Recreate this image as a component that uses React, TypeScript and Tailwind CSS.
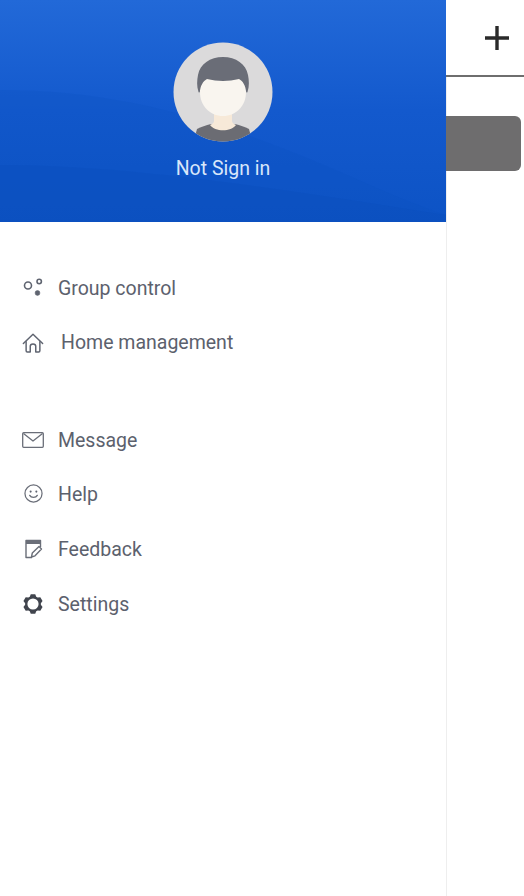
const Avatar = () => (
  <svg viewBox="0 0 100 100" className="w-[100px] h-[100px]">
    <defs>
      <clipPath id="c"><circle cx="50" cy="50" r="49.5" /></clipPath>
    </defs>
    <circle cx="50" cy="50" r="49.5" fill="#dbdadb" />
    <g clipPath="url(#c)">
      <path d="M24 87C28 85 33 83 38 82H62C67 83 72 85 76 87L80 102H20Z" fill="#6b6c73" />
      <path d="M41 66H59V79C59 81 61 82 63 83C58 90 42 90 37 83C39 82 41 81 41 79Z" fill="#f7e9d8" />
      <path d="M27 34H73V50C73 64 63 74 50 74C37 74 27 64 27 50Z" fill="#f9f5ef" />
      <path d="M25.5 50C23.5 44 24 38 25 33C27 22 37 15 50 15C63 15 73 22 75 33C76 38 76.5 44 74.5 50C73.8 51 73.2 50.5 73 49C72.5 44 70 39 66 37C61 38 55 39 50 39C45 39 39 38 34 37C30 39 27.5 44 27 49C26.8 50.5 26.2 51 25.5 50Z" fill="#6a6d77" />
    </g>
  </svg>
);

const GroupIcon = () => (
  <svg viewBox="0 0 20 20" className="w-5 h-5" fill="none" stroke="#5f6470" strokeWidth="1.6">
    <circle cx="5" cy="7.5" r="3.5" />
    <circle cx="16.2" cy="3.5" r="2.2" />
    <circle cx="14.5" cy="15" r="2.4" fill="#5f6470" strokeWidth="0.6" />
  </svg>
);

const HomeIcon = () => (
  <svg viewBox="0 0 24 24" className="w-6 h-6" fill="none" stroke="#5f6470" strokeWidth="1.6" strokeLinejoin="round" strokeLinecap="round">
    <path d="M1.5 12.5L12 2.5L22.5 12.5" />
    <path d="M4.5 10.5V20.5C4.5 21.3 5 21.8 5.8 21.8H9V15.5C9 14 10.2 13 12 13C13.8 13 15 14 15 15.5V21.8H18.2C19 21.8 19.5 21.3 19.5 20.5V10.5" />
  </svg>
);

const MailIcon = () => (
  <svg viewBox="0 0 22 16" className="w-[22px] h-4" fill="none" stroke="#6a6e78" strokeWidth="1.3" strokeLinejoin="round">
    <rect x="0.7" y="0.7" width="20.6" height="14.6" rx="1" />
    <path d="M1.5 1.5L11 9L20.5 1.5" />
  </svg>
);

const SmileIcon = () => (
  <svg viewBox="0 0 20 20" className="w-[19px] h-[19px] -translate-y-[2px]" fill="none" stroke="#6a6e78" strokeWidth="1.3" strokeLinecap="round">
    <circle cx="10" cy="10" r="9" />
    <circle cx="7" cy="8" r="1.1" fill="#5f6470" stroke="none" />
    <circle cx="13" cy="8" r="1.1" fill="#5f6470" stroke="none" />
    <path d="M6 12C7.5 14.8 12.5 14.8 14 12" strokeWidth="1.4" />
  </svg>
);

const FeedbackIcon = () => (
  <svg viewBox="0 0 20 20" className="w-5 h-5 -translate-y-[1px]" fill="none" stroke="#6a6e78" strokeWidth="1.4" strokeLinejoin="round">
    <path d="M17.5 8V1.5H3V18.5H9" />
    <rect x="3" y="1.5" width="14.5" height="3.5" fill="#6a6e78" stroke="none" />
    <path d="M8.5 18L9.3 14L16 7.5L18.5 10L12 16.8Z" />
  </svg>
);

const gearPath = (() => {
  const pt = (deg: number, r: number) => {
    const a = (deg * Math.PI) / 180;
    return `${(10 + r * Math.cos(a)).toFixed(2)} ${(10 + r * Math.sin(a)).toFixed(2)}`;
  };
  const pts: string[] = [];
  for (let i = 0; i < 6; i++) {
    const a = i * 60 - 90;
    pts.push(pt(a - 13, 10), pt(a + 13, 10), pt(a + 24, 7.9), pt(a + 36, 7.9));
  }
  return `M${pts.join("L")}Z M15.6 10A5.6 5.6 0 1 0 4.4 10A5.6 5.6 0 1 0 15.6 10Z`;
})();

const GearIcon = () => (
  <svg viewBox="0 0 20 20" className="w-5 h-5">
    <path d={gearPath} fill="#41454e" fillRule="evenodd" />
  </svg>
);

const Row = ({ icon, label, gap }: { icon: React.ReactNode; label: string; gap: string }) => (
  <div className={`flex items-center h-[54.6px] pl-[22px] ${gap}`}>
    <div className="w-[22px] flex justify-center items-center shrink-0">{icon}</div>
    <span className="text-[19.5px] text-[#5c616d] leading-none">{label}</span>
  </div>
);

export default function App() {
  return (
    <div className="flex w-[524px] h-[896px] bg-white overflow-hidden font-['Roboto',sans-serif]">
      <div className="w-[446px] shrink-0 flex flex-col">
        <div className="relative h-[222px] bg-gradient-to-b from-[#2269d8] via-[#1359cd] to-[#0d53c5] flex flex-col items-center pt-[42px] overflow-hidden">
          <svg viewBox="0 0 446 222" className="absolute inset-0 w-full h-full" preserveAspectRatio="none">
            <path d="M0 90C110 90 200 115 300 155C350 175 400 200 446 215V222H0Z" fill="#0b4fbe" opacity="0.2" />
            <path d="M0 165C120 165 260 185 446 215V222H0Z" fill="#0a4dbb" opacity="0.3" />
          </svg>
          <div className="relative">
            <Avatar />
          </div>
          <span className="relative mt-[16px] text-[19.5px] leading-[22px] text-[#d8e6fa]">Not Sign in</span>
        </div>
        <div className="pt-[39px] flex flex-col">
          <Row icon={<GroupIcon />} label="Group control" gap="gap-[14px]" />
          <Row icon={<HomeIcon />} label="Home management" gap="gap-[17px]" />
          <div className="h-[43px]" />
          <Row icon={<MailIcon />} label="Message" gap="gap-[14px]" />
          <Row icon={<SmileIcon />} label="Help" gap="gap-[14px]" />
          <Row icon={<FeedbackIcon />} label="Feedback" gap="gap-[14px]" />
          <Row icon={<GearIcon />} label="Settings" gap="gap-[14px]" />
        </div>
      </div>
      <div className="flex-1 flex flex-col">
        <div className="h-[77px] border-b-2 border-[#6e6e6e] flex items-center pl-[38px]">
          <svg viewBox="0 0 26 26" className="w-[26px] h-[26px]" stroke="#2a2a2a" strokeWidth="3.4">
            <path d="M13 1V25M1 13H25" />
          </svg>
        </div>
        <div className="flex-1 border-l border-[#eeeeee] pt-[39px]">
          <div className="-ml-px w-[75px] h-[55px] bg-[#6e6d6e] rounded-r-[6px]" />
        </div>
      </div>
    </div>
  );
}
